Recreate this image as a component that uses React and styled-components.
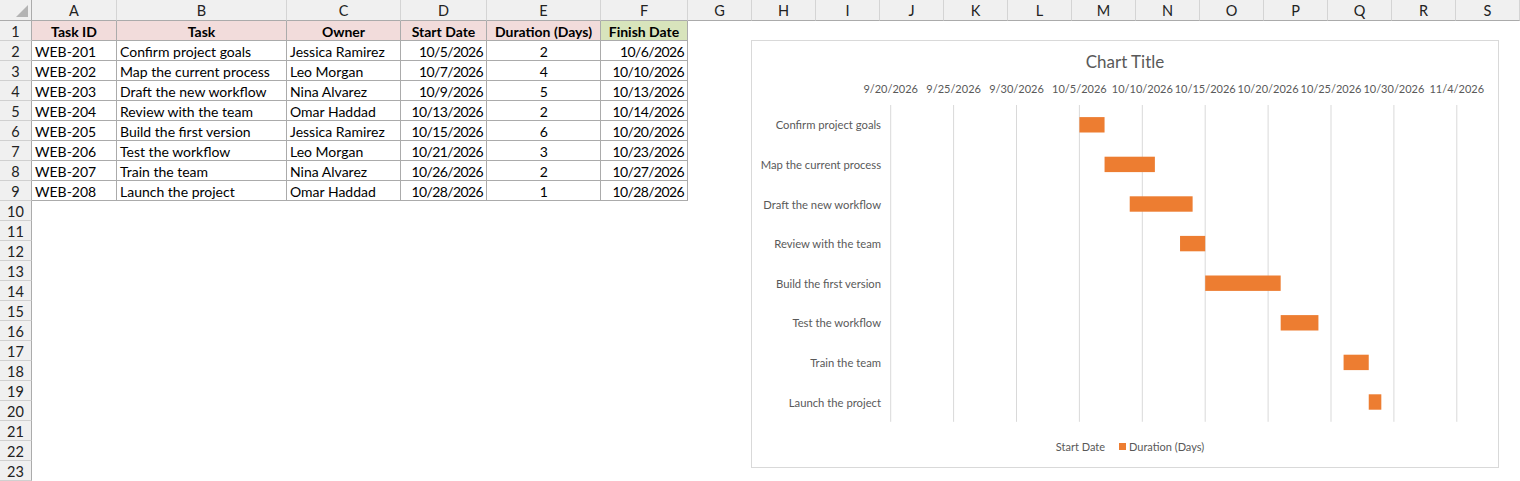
import React from 'react'
import styled, { createGlobalStyle } from 'styled-components'

const GlobalStyle = createGlobalStyle`
  html, body {
    margin: 0;
    padding: 0;
    background: #fff;
  }
  body {
    font-family: Lato, "Liberation Sans", sans-serif;
    overflow: hidden;
  }
`

const COLS = [
  { key: 'A', w: 85 },
  { key: 'B', w: 170 },
  { key: 'C', w: 114 },
  { key: 'D', w: 86 },
  { key: 'E', w: 114 },
  { key: 'F', w: 87 },
  { key: 'G', w: 64 },
  ...'HIJKLMNOPQRS'.split('').map(k => ({ key: k, w: 64 })),
]

const TEMPLATE = `32px ${COLS.map(c => c.w + 'px').join(' ')}`

const HEADERS = ['Task ID', 'Task', 'Owner', 'Start Date', 'Duration (Days)', 'Finish Date']
const ALIGN = ['left', 'left', 'left', 'right', 'center', 'right']

// id, task, owner, start, days, finish, offset in days from 9/20/2026
const TASKS = [
  ['WEB-201', 'Confirm project goals', 'Jessica Ramirez', '10/5/2026', 2, '10/6/2026', 15],
  ['WEB-202', 'Map the current process', 'Leo Morgan', '10/7/2026', 4, '10/10/2026', 17],
  ['WEB-203', 'Draft the new workflow', 'Nina Alvarez', '10/9/2026', 5, '10/13/2026', 19],
  ['WEB-204', 'Review with the team', 'Omar Haddad', '10/13/2026', 2, '10/14/2026', 23],
  ['WEB-205', 'Build the first version', 'Jessica Ramirez', '10/15/2026', 6, '10/20/2026', 25],
  ['WEB-206', 'Test the workflow', 'Leo Morgan', '10/21/2026', 3, '10/23/2026', 31],
  ['WEB-207', 'Train the team', 'Nina Alvarez', '10/26/2026', 2, '10/27/2026', 36],
  ['WEB-208', 'Launch the project', 'Omar Haddad', '10/28/2026', 1, '10/28/2026', 38],
]

const AXIS = ['9/20/2026', '9/25/2026', '9/30/2026', '10/5/2026', '10/10/2026', '10/15/2026', '10/20/2026', '10/25/2026', '10/30/2026', '11/4/2026']

function App() {
  const rows = []
  for (let r = 1; r <= 23; r++) rows.push(r)

  return (
    <>
      <GlobalStyle />
      <Sheet>
        <Row $h={21}>
          <Corner><Triangle /></Corner>
          {COLS.map(c => <ColHeader key={c.key}>{c.key}</ColHeader>)}
        </Row>
        {rows.map(r => (
          <Row key={r} $h={20}>
            <RowHeader>{r}</RowHeader>
            {r === 1 && HEADERS.map((h, i) => (
              <HeadCell key={h} $fill={i === 5 ? '#d8e4bc' : '#f2dcdb'}>{h}</HeadCell>
            ))}
            {r > 1 && r <= 9 && TASKS[r - 2].slice(0, 6).map((v, i) => (
              <Cell key={i} $align={ALIGN[i]} $num={i >= 3}>{v}</Cell>
            ))}
          </Row>
        ))}
        <GanttChart />
      </Sheet>
    </>
  )
}

function GanttChart() {
  const axisX = 138.7
  const step = 62.9
  const perDay = step / 5
  const top = 28
  const catH = 39.6
  const barH = 15.4

  return (
    <Chart>
      <ChartTitle>Chart Title</ChartTitle>
      <Plot width="746" height="356">
        {AXIS.map((d, i) => (
          <g key={d}>
            <line x1={axisX + i * step} x2={axisX + i * step} y1={top} y2={top + catH * 8} stroke="#d9d9d9" strokeWidth="1" />
            <AxisText x={axisX + i * step} y={11} textAnchor="middle" dominantBaseline="central">{d}</AxisText>
          </g>
        ))}
        {TASKS.map((t, i) => {
          const cy = top + catH * i + catH / 2
          return (
            <g key={t[0]}>
              <CatText x={129} y={cy} textAnchor="end" dominantBaseline="central">{t[1]}</CatText>
              <rect x={axisX + t[6] * perDay} y={cy - barH / 2} width={t[4] * perDay} height={barH} fill="#ed7d31" />
            </g>
          )
        })}
      </Plot>
      <Legend>
        <LegendItem><Swatch $color="transparent" />Start Date</LegendItem>
        <LegendItem><Swatch $color="#ed7d31" />Duration (Days)</LegendItem>
      </Legend>
    </Chart>
  )
}

export default App

const Sheet = styled.div`
  position: relative;
  width: 1520px;
  height: 481px;
  overflow: hidden;
  font-size: 14px;
  color: #000;
`

const Row = styled.div`
  display: grid;
  grid-template-columns: ${TEMPLATE};
  height: ${props => props.$h}px;
`

const Corner = styled.div`
  position: relative;
  background: #f0f0f0;
  border-right: 1px solid #ababab;
  border-bottom: 1px solid #ababab;
`

const Triangle = styled.div`
  position: absolute;
  right: 3px;
  bottom: 3px;
  width: 12px;
  height: 12px;
  background: #b4b4b4;
  clip-path: polygon(100% 0, 100% 100%, 0 100%);
`

const ColHeader = styled.div`
  background: #f0f0f0;
  border-right: 1px solid #d4d4d4;
  border-bottom: 1px solid #ababab;
  display: flex;
  align-items: center;
  justify-content: center;
  padding-top: 1px;
  box-sizing: border-box;
  color: #222;
  font-size: 14.5px;
`

const RowHeader = styled.div`
  background: #f0f0f0;
  border-right: 1px solid #ababab;
  border-bottom: 1px solid #d0d0d0;
  display: flex;
  align-items: center;
  justify-content: center;
  padding-top: 1px;
  box-sizing: border-box;
  color: #222;
  font-size: 14.5px;
`

const Cell = styled.div`
  border-right: 1px solid #ababab;
  border-bottom: 1px solid #ababab;
  box-sizing: border-box;
  padding: 1px 3px 0 3px;
  display: flex;
  align-items: center;
  justify-content: ${props => props.$align === 'right' ? 'flex-end' : props.$align === 'center' ? 'center' : 'flex-start'};
  white-space: nowrap;
  overflow: hidden;
  letter-spacing: ${props => props.$num ? '-0.6px' : '0'};
`

const HeadCell = styled(Cell)`
  background: ${props => props.$fill};
  font-weight: 700;
  justify-content: center;
  letter-spacing: 0;
`

const Chart = styled.div`
  position: absolute;
  left: 751px;
  top: 40px;
  width: 748px;
  height: 428px;
  box-sizing: border-box;
  border: 1px solid #d9d9d9;
  background: #fff;
  display: flex;
  flex-direction: column;
  font-family: Lato, "Liberation Sans", sans-serif;
  color: #595959;
`

const ChartTitle = styled.div`
  height: 36px;
  padding-top: 8px;
  box-sizing: border-box;
  line-height: 26px;
  text-align: center;
  font-size: 17px;
`

const Plot = styled.svg`
  display: block;
  flex: none;
`

const AxisText = styled.text`
  font-size: 11px;
  fill: #595959;
  font-family: Lato, "Liberation Sans", sans-serif;
`

const CatText = styled(AxisText)`
  font-size: 11.25px;
`

const Legend = styled.div`
  height: 26px;
  display: flex;
  align-items: center;
  justify-content: center;
  gap: 14px;
  font-size: 11px;
`

const LegendItem = styled.div`
  display: flex;
  align-items: center;
  gap: 3px;
`

const Swatch = styled.span`
  width: 7px;
  height: 7px;
  background: ${props => props.$color};
`
